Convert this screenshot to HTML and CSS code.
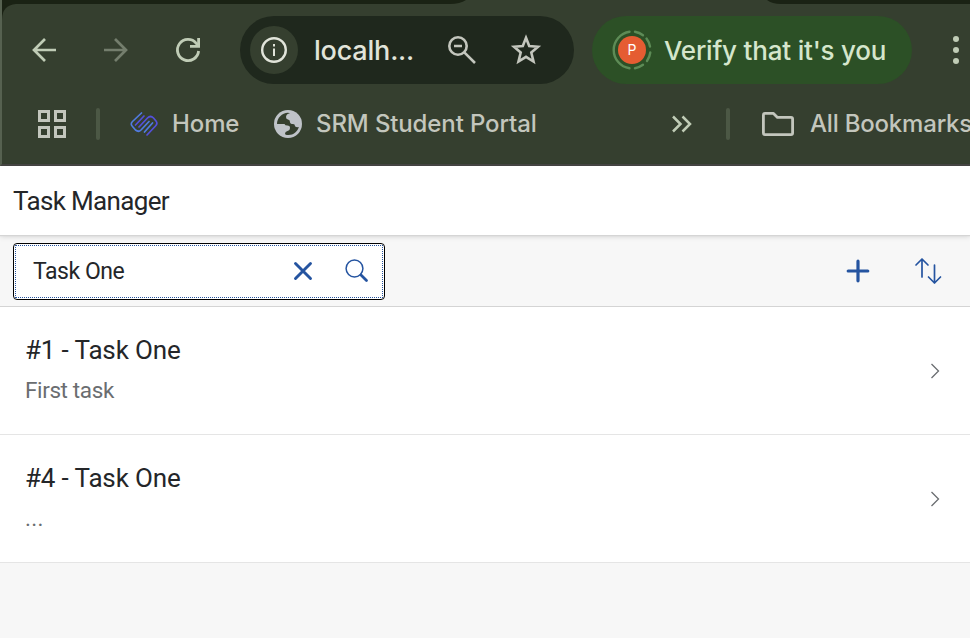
FILE: index.html
```html
<!DOCTYPE html>
<html lang="en">
<head>
<meta charset="utf-8">
<title>Task Manager</title>
<link rel="stylesheet" href="styles.css">
</head>
<body>
<header class="browser">
  <svg class="tabstrip" width="970" height="20" viewBox="0 0 970 20">
    <path fill="#1a2214" d="M0 0H466Q460 4 450 4H16Q2 5 2 20H0Z"/>
    <path fill="#1a2214" d="M767 0H970V4H781Q772 4 767 0Z"/>
    <path fill="#566150" d="M0 9H2V20H0Z"/>
  </svg>
  <div class="nav">
    <svg class="back" width="28" height="28" viewBox="0 0 28 28" fill="none" stroke="#c0ccb6" stroke-width="2.7"><path d="M26 14H4M15 3L4 14L15 25"/></svg>
    <svg class="forward" width="28" height="28" viewBox="0 0 28 28" fill="none" stroke="#747e6d" stroke-width="2.7"><path d="M2 14H24M13 3L24 14L13 25"/></svg>
    <svg class="reload" width="28" height="28" viewBox="0 0 28 28" fill="none" stroke="#c0ccb6" stroke-width="2.8"><path d="M24.6 15A10.6 10.6 0 1 1 22.3 7.3L24 10"/><path d="M24.6 2V10.4H16"/></svg>
    <div class="omnibox">
      <span class="info"><svg width="28" height="28" viewBox="0 0 28 28" fill="none" stroke="#e1e4da" stroke-width="2.4"><circle cx="14" cy="14" r="11.8"/><path d="M14 12.5V20M14 8V10.5" stroke-width="2"/></svg></span>
      <span class="url">localh...</span>
      <svg class="lens" width="32" height="32" viewBox="0 0 32 32" fill="none" stroke="#c3c6bd" stroke-width="2.6"><circle cx="12" cy="12" r="8.7"/><path d="M18.3 18.3L29 29M8 12H16"/></svg>
      <svg class="star" width="32" height="32" viewBox="0 0 32 32" fill="none" stroke="#c3c6bd" stroke-width="2.6"><path d="M16 3.8L19.2 12L28 12.7L21.3 18.5L23.5 27.5L16 22.8L8.500 27.500L10.700 18.500L4 12.700L12.800 12Z"/></svg>
    </div>
    <div class="verify">
      <svg width="42" height="42" viewBox="0 0 42 42" fill="none" stroke="#5d8b56" stroke-width="2.4" stroke-linecap="round">
        <circle cx="21" cy="21" r="14" fill="#e55c32" stroke="none"/>
        <path d="M18.500 2.700A18.500 18.500 0 0 0 18.500 39.300M24 2.800A18.500 18.500 0 0 1 32 6.200M35.500 9.600A18.500 18.500 0 0 1 39 17.500M39.300 23.500A18.500 18.500 0 0 1 36 32M32 35.800A18.500 18.500 0 0 1 24 39.200"/>
        <text class="initial" x="21" y="26" text-anchor="middle">P</text>
      </svg>
      <span>Verify that it's you</span>
    </div>
    <svg class="dots" width="8" height="30" viewBox="0 0 8 30" fill="#c0ccb6"><circle cx="4" cy="4" r="3"/><circle cx="4" cy="15" r="3"/><circle cx="4" cy="26" r="3"/></svg>
  </div>
  <div class="bookmarks">
    <svg class="apps" width="28" height="28" viewBox="0 0 28 28" fill="none" stroke="#c3c6bd" stroke-width="3"><path d="M1.500 1.500h9v9h-9zM17.500 1.500h9v9h-9zM1.500 17.500h9v9h-9zM17.500 17.500h9v9h-9z"/></svg>
    <i class="divider"></i>
    <svg class="logo" width="28" height="24" viewBox="0 0 28 24" fill="none" stroke-width="1.700" stroke-linecap="round" stroke-linejoin="round"><path stroke="#517bdf" d="M11.500 1L2.500 9.500Q0 12 2.500 14.500L5.500 18Q8.500 20.500 11 18L19 9.500M14.500 20L22.500 11"/><path stroke="#5450dc" d="M5.500 13L14 4M9 15L17.500 6Q20.500 3 23.500 6L26 9Q28 11.500 25.500 14L17 23"/></svg>
    <span class="home">Home</span>
    <svg class="globe" width="28" height="28" viewBox="0 0 28 28"><circle cx="14" cy="14" r="14" fill="#bfc3c9"/><path fill="#353f2f" d="M16 3.200Q12 4 12 7Q12 9 14 9.500Q16 9.500 16 12Q16 14 19 14Q21 14 21 16Q21 17.500 24.800 17C23.500 21.500 19.500 25 14.500 25Q11 25 11 23.700Q11 21.500 13.500 21Q16 20.500 16 17.500Q16 15.500 13.500 15.500Q11 15.500 10.500 14H3C3 8 8 3 14 2.800Z"/></svg>
    <span class="srm">SRM Student Portal</span>
    <svg class="more" width="24" height="18" viewBox="0 0 24 18" fill="none" stroke="#c0ccb6" stroke-width="2.500"><path d="M3 1.500L10.500 9L3 16.500M12.500 1.500L20 9L12.500 16.500"/></svg>
    <i class="divider"></i>
    <svg class="folder" width="32" height="24" viewBox="0 0 32 24" fill="none" stroke="#c3c6bd" stroke-width="2.800" stroke-linejoin="round"><path d="M3 1.400H11.500L15.500 5.400H29Q30.600 5.400 30.600 7V21Q30.600 22.600 29 22.600H3Q1.400 22.600 1.400 21V3Q1.400 1.400 3 1.400Z"/></svg>
    <span class="all">All Bookmarks</span>
  </div>
</header>
<main class="app">
  <h1 class="title">Task Manager</h1>
  <div class="toolbar">
    <div class="search">
      <span class="query">Task One</span>
      <svg class="clear" width="20" height="20" viewBox="0 0 20 20" stroke="#2554a0" stroke-width="2.900" stroke-linecap="round"><path d="M2.500 2.500L17.500 17.500M17.500 2.500L2.500 17.500"/></svg>
      <svg class="find" width="24" height="24" viewBox="0 0 24 24" fill="none" stroke="#2554a0" stroke-linecap="round"><circle cx="9.500" cy="9.500" r="8.400" stroke-width="1.500"/><path stroke-width="2.800" d="M16 16L21.500 21.500"/></svg>
    </div>
    <svg class="add" width="24" height="24" viewBox="0 0 24 24" stroke="#2554a0" stroke-width="3.200" stroke-linecap="round"><path d="M12 2.200V21.800M2.200 12H21.800"/></svg>
    <svg class="sort" width="28" height="28" viewBox="0 0 28 28" fill="none" stroke="#2554a0" stroke-width="1.700" stroke-linecap="round" stroke-linejoin="round"><path d="M8 20V2M2 8L8 2L14 8M20.500 8V26M14.500 20L20.500 26L26.500 20"/></svg>
  </div>
  <ul class="list">
    <li>
      <div><h2>#1 - Task One</h2><p>First task</p></div>
      <svg width="10" height="16" viewBox="0 0 10 16" fill="none" stroke="#6a6d70" stroke-width="1.300"><path d="M1.500 1L8.500 8L1.500 15"/></svg>
    </li>
    <li>
      <div><h2>#4 - Task One</h2><p class="dotted">...</p></div>
      <svg width="10" height="16" viewBox="0 0 10 16" fill="none" stroke="#6a6d70" stroke-width="1.300"><path d="M1.500 1L8.500 8L1.500 15"/></svg>
    </li>
  </ul>
</main>
</body>
</html>
```
FILE: styles.css
```css
* { box-sizing: border-box; }
body { margin: 0; width: 970px; height: 638px; overflow: hidden; background: #f7f7f7; font-family: Roboto, "Open Sans", sans-serif; }
svg { display: block; flex: none; }
span { white-space: nowrap; }

.browser { position: relative; height: 166px; padding-top: 16px; background: #353f2f; border-bottom: 2px solid #454543; border-left: 2px solid #566150; font-family: Inter, sans-serif; font-weight: 450; color: #c3c6bd; overflow: hidden; }
.tabstrip { position: absolute; top: 0; left: -2px; }
.nav { display: flex; align-items: center; height: 68px; padding-left: 28px; }
.forward { margin-left: 44px; }
.reload { margin-left: 44px; }
.omnibox { display: flex; flex: none; align-items: center; width: 334px; height: 68px; margin-left: 38px; padding-left: 10px; border-radius: 34px; background: #1f281d; }
.info { display: flex; align-items: center; justify-content: center; width: 48px; height: 48px; border-radius: 50%; background: #353f2f; }
.url { width: 100px; margin-left: 16px; font-size: 27px; letter-spacing: -.2px; color: #e1e4da; }
.lens { margin-left: 32px; }
.star { margin-left: 32px; }
.verify { display: flex; flex: none; align-items: center; width: 320px; height: 68px; margin-left: 18px; padding-left: 19px; border-radius: 34px; background: #2c5026; color: #d5e6cc; font-size: 26px; }
.verify span { margin-left: 11px; letter-spacing: -.2px; }
.initial { font: 14px Inter, sans-serif; fill: #fff; stroke: none; }
.dots { margin-left: 40px; }

.bookmarks { display: flex; align-items: center; height: 40px; margin-top: 20px; padding-left: 36px; font-size: 24px; }
.bookmarks span { flex: none; padding-bottom: 2px; letter-spacing: -.12px; }
.divider { flex: none; width: 4px; height: 32px; border-radius: 2px; background: #4c5845; }
.apps + .divider { margin-left: 30px; }
.logo { margin-left: 30px; }
.home { width: 67px; margin-left: 14px; }
.globe { margin-left: 35px; }
.srm { width: 222px; margin-left: 14px; }
.more { margin-left: 132px; }
.more + .divider { margin-left: 32px; }
.folder { margin-left: 32px; }
.bookmarks .all { margin-left: 16px; letter-spacing: -.2px; }

.title { position: relative; height: 69px; margin: 0; padding-left: 13px; background: #fff; box-shadow: 0 1px 1px #d5d5d5, 0 2px 5px rgba(0, 0, 0, .13); color: #242629; font: 400 26px/71px Roboto, sans-serif; letter-spacing: -.65px; }
.toolbar { display: flex; align-items: center; height: 72px; padding: 1px 0 0 13px; border-bottom: 1px solid #d4d4d4; background: #f7f7f7; }
.search { position: relative; display: flex; align-items: center; width: 372px; height: 57px; padding-left: 19px; border: 1.500px solid #000; border-radius: 4px; background: #fff; }
.search::after { content: ""; position: absolute; inset: 1px; border: 1px dotted #2554a0; }
.query { width: 260px; color: #242629; font-size: 23px; letter-spacing: -.45px; }
.find { margin-left: 32px; }
.add { margin-left: 461px; }
.sort { margin-left: 44px; }
.list { margin: 0; padding: 0; list-style: none; }
.list li { display: flex; align-items: center; justify-content: space-between; height: 128px; padding: 0 30px 0 25px; border-bottom: 1px solid #e5e5e5; background: #fff; }
.list h2 { margin: -1px 0 0; color: #242629; font-size: 26px; font-weight: 400; line-height: 40px; letter-spacing: -.15px; }
.list p { margin: 0 0 1px; color: #6a6d70; font-size: 22.500px; line-height: 40px; letter-spacing: -.38px; }
.list .dotted { letter-spacing: .3px; }
```
